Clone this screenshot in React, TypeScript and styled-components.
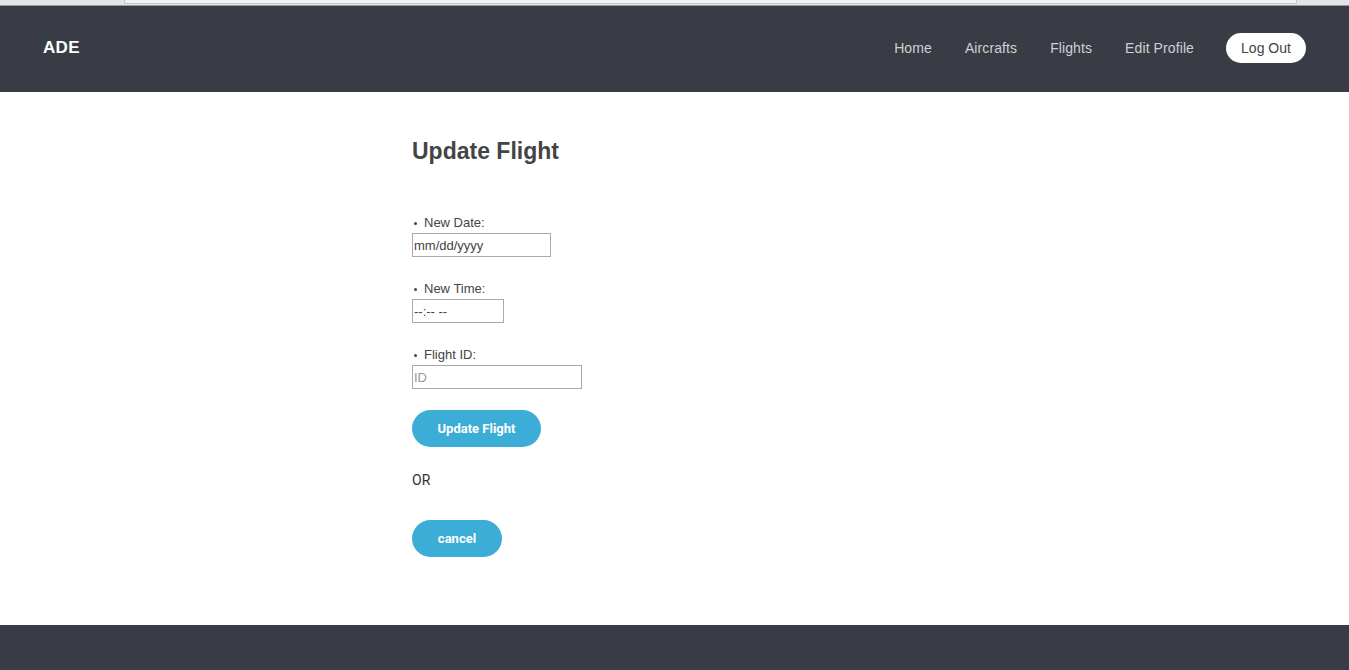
import styled, { createGlobalStyle } from "styled-components";

const GlobalStyle = createGlobalStyle`
  html, body {
    margin: 0;
    padding: 0;
    background: #ffffff;
    font-family: "Liberation Sans", Arial, sans-serif;
  }
`;

const BrowserStrip = styled.div`
  height: 5px;
  background: #e4e4e4;
  border-bottom: 1px solid #9a9a9a;
  display: flex;
  padding-left: 124px;
  padding-right: 52px;
`;

const ScrollThumb = styled.div`
  flex: 1;
  height: 3px;
  background: #f2f2f2;
  border-left: 1px solid #c6c6c6;
  border-right: 1px solid #c6c6c6;
  border-bottom: 1px solid #c6c6c6;
`;

const Header = styled.header`
  box-sizing: border-box;
  height: 86px;
  background: #3a3c45;
  display: flex;
  align-items: center;
  justify-content: space-between;
  padding: 0 43px 2px;
`;

const Brand = styled.div`
  color: #ffffff;
  font-weight: bold;
  font-size: 17px;
  letter-spacing: 0.3px;
`;

const Nav = styled.nav`
  display: flex;
  align-items: center;
`;

const NavLink = styled.a`
  color: #cfd0d4;
  font-size: 14px;
  letter-spacing: 0.1px;
  text-decoration: none;
  margin-right: 33px;
`;

const LogOut = styled.button`
  background: #ffffff;
  color: #444;
  border: none;
  border-radius: 15px;
  height: 30px;
  width: 80px;
  font-family: inherit;
  font-size: 14px;
  margin-left: -1px;
`;

const Main = styled.main`
  height: 533px;
`;

const Container = styled.div`
  width: 525px;
  margin: 0 auto;
  padding-top: 44px;
  color: #444;
`;

const Title = styled.h1`
  margin: 0;
  font-size: 23px;
  font-weight: bold;
  line-height: 30px;
  color: #444;
`;

const FieldList = styled.ul`
  list-style: none;
  margin: 49px 0 0;
  padding: 0;
`;

const Field = styled.li`
  margin-bottom: 24px;

  &:last-child {
    margin-bottom: 21px;
  }
`;

const Label = styled.div`
  font-size: 13px;
  line-height: 15px;
  padding-left: 12px;
  position: relative;
  margin-bottom: 3px;

  &::before {
    content: "";
    position: absolute;
    left: 2px;
    top: 7px;
    width: 3px;
    height: 3px;
    border-radius: 50%;
    background: #444;
  }
`;

const Input = styled.input<{ $w: number; $dark?: boolean }>`
  display: block;
  box-sizing: border-box;
  width: ${(p) => p.$w}px;
  height: 24px;
  border: 1px solid #a9a9a9;
  padding: 0 1px;
  font-family: inherit;
  font-size: 13px;
  color: #444;
  outline: none;

  &::placeholder {
    color: ${(p) => (p.$dark ? "#444" : "#999")};
  }
`;

const PillButton = styled.button<{ $w: number }>`
  width: ${(p) => p.$w}px;
  height: 37px;
  border: none;
  border-radius: 19px;
  background: #3badd6;
  color: #ffffff;
  font-family: Roboto, "Liberation Sans", sans-serif;
  font-weight: bold;
  font-size: 13px;
  display: block;
`;

const Or = styled.p`
  margin: 25px 0 32px;
  font-family: Roboto, "Liberation Sans", sans-serif;
  font-size: 14px;
  line-height: 16px;
  color: #333;
`;

const Footer = styled.footer`
  height: 45px;
  background: #3a3c45;
`;

export default function App() {
  return (
    <>
      <GlobalStyle />
      <BrowserStrip>
        <ScrollThumb />
      </BrowserStrip>
      <Header>
        <Brand>ADE</Brand>
        <Nav>
          <NavLink>Home</NavLink>
          <NavLink>Aircrafts</NavLink>
          <NavLink>Flights</NavLink>
          <NavLink>Edit Profile</NavLink>
          <LogOut>Log Out</LogOut>
        </Nav>
      </Header>
      <Main>
        <Container>
          <Title>Update Flight</Title>
          <FieldList>
            <Field>
              <Label>New Date:</Label>
              <Input $w={139} $dark placeholder="mm/dd/yyyy" />
            </Field>
            <Field>
              <Label>New Time:</Label>
              <Input $w={92} $dark placeholder="--:-- --" />
            </Field>
            <Field>
              <Label>Flight ID:</Label>
              <Input $w={170} placeholder="ID" />
            </Field>
          </FieldList>
          <PillButton $w={129}>Update Flight</PillButton>
          <Or>OR</Or>
          <PillButton $w={90}>cancel</PillButton>
        </Container>
      </Main>
      <Footer />
    </>
  );
}
